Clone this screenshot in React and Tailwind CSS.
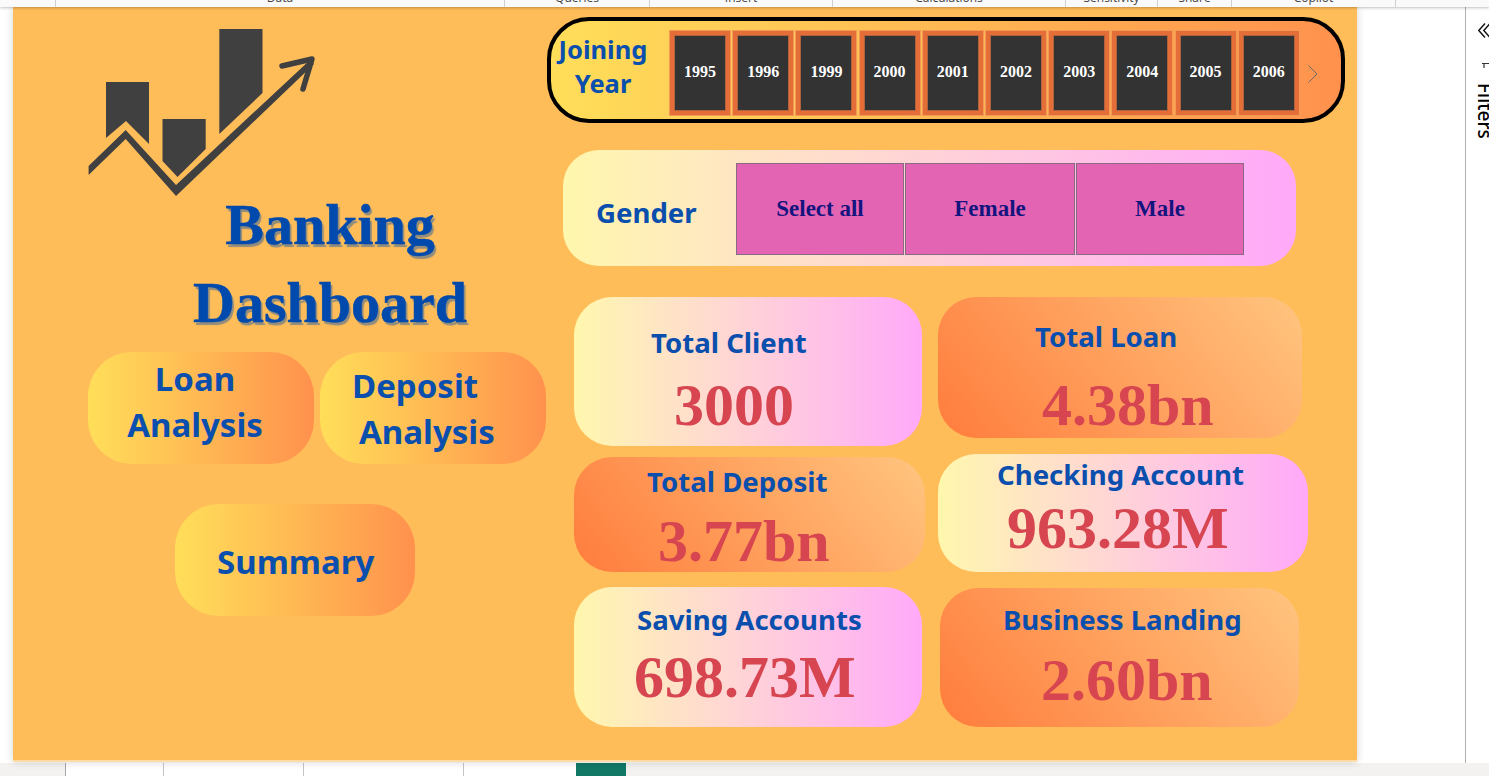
import React from "react";

const NOTO = "font-['Noto_Sans',sans-serif]";
const years = ["1995", "1996", "1999", "2000", "2001", "2002", "2003", "2004", "2005", "2006"];
const ribbon = [
  ["w-[56px]", ""],
  ["w-[449px]", "Data"],
  ["w-[145px]", "Queries"],
  ["w-[183px]", "Insert"],
  ["w-[233px]", "Calculations"],
  ["w-[92px]", "Sensitivity"],
  ["w-[74px]", "Share"],
  ["w-[164px]", "Copilot"],
];
const genders = [
  ["w-[168px]", "Select all"],
  ["w-[170px]", "Female"],
  ["w-[168px]", "Male"],
];

function Logo() {
  return (
    <svg width="240" height="175" viewBox="80 25 240 175" className="block" fill="#404040">
      <polygon points="106,82 149,82 149,144 126,121 106,138" />
      <polygon points="162.5,119 205.7,119 205.7,149 177.5,177 162.5,161" />
      <polygon points="219.3,29 262.5,29 262.5,93 219.3,134" />
      <polygon points="88.6,166 125.7,130 176,185 310,60 314,64 176,196 125.7,139 88.6,175" />
      <polyline points="282,66 312,59 303,89" fill="none" stroke="#404040" strokeWidth="5.5" strokeLinecap="round" strokeLinejoin="round" />
    </svg>
  );
}

function NavButton({ className, children }) {
  return (
    <div className={`h-[112px] rounded-[44px] bg-gradient-to-r from-[#ffde59] to-[#ff914d] text-[#0a4fad] text-[33px] font-bold leading-[46px] ${NOTO} ${className}`}>
      {children}
    </div>
  );
}

function Card({ pink, className, labelClass, valueClass, label, value }) {
  return (
    <div className={`rounded-[38px] whitespace-nowrap ${pink ? "bg-gradient-to-r from-[#fff7ad] to-[#ffa9f9]" : "bg-[linear-gradient(50deg,#ff7c3c,#ffc57f)]"} ${className}`}>
      <div className={`text-[27.6px] leading-[36px] font-bold text-[#0a4fad] ${NOTO} ${labelClass}`}>{label}</div>
      <div className={`text-[60px] leading-[60px] font-bold text-[#d64550] font-['Liberation_Serif',serif] ${valueClass}`}>{value}</div>
    </div>
  );
}

export default function App() {
  return (
    <div className="w-[1489px] h-[776px] overflow-hidden bg-white flex flex-col">
      <div className="h-[7px] bg-[#fafafa] flex shrink-0 overflow-hidden relative z-10 shadow-[0_1px_3px_rgba(0,0,0,0.25)]">
        {ribbon.map(([w, t], i) => (
          <div key={i} className={`${w} h-[7px] border-r border-[#cfcfcf] text-center text-[12px] leading-[14px] text-[#444] font-['Open_Sans',sans-serif] overflow-hidden`}>
            <div className="-mt-[9px]">{t}</div>
          </div>
        ))}
      </div>

      <div className="flex-1 flex min-h-0">
        <div className="w-[13px] bg-white" />
        <div className="w-[1344px] h-[755px] bg-[#ffbd59] border-b-2 border-[#ffdca6] flex shadow-[0_0_8px_rgba(0,0,0,0.18)] relative">
          <div className="w-[534px] shrink-0 flex flex-col pl-[67px] pt-[18px]">
            <Logo />
            <div className="ml-[30px] -mt-[14px] w-[440px] text-center font-['Liberation_Serif',serif] font-bold text-[58px] leading-[78px] text-[#004aad] [-webkit-text-stroke:0.5px_#004aad] [text-shadow:2px_3px_1px_#8f8c7e]">
              <div>Banking</div>
              <div>Dashboard</div>
            </div>
            <div className="flex gap-[6px] ml-[8px] mt-[10px]">
              <NavButton className="w-[226px] text-center pr-[12px] pt-[4px]">
                <div>Loan</div>
                <div>Analysis</div>
              </NavButton>
              <NavButton className="w-[226px] pt-[11px]">
                <div className="pl-[32px]">Deposit</div>
                <div className="pl-[39px]">Analysis</div>
              </NavButton>
            </div>
            <NavButton className="w-[240px] ml-[95px] mt-[40px] pl-[42px] pt-[35px]">Summary</NavButton>
          </div>

          <div className="flex-1 flex flex-col pt-[10px]">
            <div className="w-[798px] h-[106px] border-4 border-black rounded-[42px] bg-gradient-to-r from-[#ffde59] to-[#ff914d] flex items-start">
              <div className={`w-[104px] mt-[11px] text-center text-[25.5px] leading-[34px] font-bold text-[#0a4fad] ${NOTO}`}>
                <div>Joining</div>
                <div>Year</div>
              </div>
              <div className="flex gap-[1.2px] ml-[14px] mt-[9px]">
                {years.map((y) => (
                  <div key={y} className="w-[62px] h-[86px] bg-[#e56d37] p-[4px] border border-[#f09a55]">
                    <div className="h-full bg-[#333333] border border-[#b0623f] flex items-center justify-center pb-[2px] text-white text-[16px] font-bold font-['Liberation_Serif',serif]">
                      {y}
                    </div>
                  </div>
                ))}
              </div>
              <svg width="10" height="18" viewBox="0 0 10 18" className="ml-[8px] mt-[44px]" fill="none" stroke="#6b6b6b" strokeWidth="1">
                <polyline points="0.5,0.5 9,9 0.5,17.5" />
              </svg>
            </div>

            <div className="ml-[16px] mt-[27px] w-[733px] h-[116px] rounded-[36px] bg-gradient-to-r from-[#fff7ad] to-[#ffa9f9] flex items-start">
              <div className={`w-[173px] pl-[33px] pt-[42px] text-[27.6px] leading-[40px] font-bold text-[#0a4fad] ${NOTO}`}>Gender</div>
              <div className="flex gap-[1px] mt-[13px]">
                {genders.map(([w, g]) => (
                  <div key={g} className={`${w} h-[92px] bg-[#e464b4] border border-[#8a6a82] flex items-center justify-center text-[23px] font-bold text-[#14147e] font-['Liberation_Serif',serif]`}>
                    {g}
                  </div>
                ))}
              </div>
            </div>

            <div className="flex mt-[31px] ml-[27px] gap-[13px]">
              <div className="w-[351px] flex flex-col">
                <Card pink className="w-[348px] h-[149px]" labelClass="pl-[77px] pt-[27px]" valueClass="pl-[100px] mt-[15px]" label="Total Client" value="3000" />
                <Card className="w-[351px] h-[115px] mt-[11px]" labelClass="pl-[73px] pt-[6px]" valueClass="pl-[84px] mt-[12px]" label="Total Deposit" value="3.77bn" />
                <Card pink className="w-[348px] h-[140px] mt-[15px]" labelClass="pl-[63px] pt-[14px]" valueClass="pl-[60px] mt-[10px]" label="Saving Accounts" value="698.73M" />
              </div>
              <div className="flex flex-col">
                <Card className="w-[364px] h-[141px]" labelClass="pl-[97px] pt-[21px]" valueClass="pl-[104px] mt-[21px]" label="Total Loan" value="4.38bn" />
                <Card pink className="w-[370px] h-[118px] mt-[16px]" labelClass="pl-[59px] pt-[2px]" valueClass="pl-[69px] mt-[6px]" label="Checking Account" value="963.28M" />
                <Card className="w-[359px] h-[139px] mt-[16px] ml-[2px]" labelClass="pl-[63px] pt-[13px]" valueClass="pl-[101px] mt-[13px]" label="Business Landing" value="2.60bn" />
              </div>
            </div>
          </div>
        </div>

        <div className="w-[108px] bg-white" />
        <div className="flex-1 border-l border-[#b0b0b0] bg-white flex flex-col items-start pl-[12px] pt-[16px] overflow-hidden">
          <svg width="12" height="15" viewBox="0 0 12 15" fill="none" stroke="#111" strokeWidth="1.4" className="shrink-0">
            <polyline points="7,0.5 0.8,7.5 7,14.5" />
            <polyline points="12,0.5 5.8,7.5 12,14.5" />
          </svg>
          <svg width="10" height="7" viewBox="0 0 10 7" fill="none" stroke="#333" strokeWidth="1.2" className="shrink-0 mt-[24px] ml-[3px]">
            <path d="M1 1.5H10M3 1.5V6" />
          </svg>
          <div className={`mt-[14px] -ml-[5px] w-[24px] shrink-0 [writing-mode:vertical-rl] text-[19px] leading-[24px] h-[60px] text-black font-medium ${NOTO}`}>Filters</div>
        </div>
      </div>

      <div className="h-[13px] bg-[#f3f2f1] flex shrink-0">
        <div className="w-[65px]" />
        <div className="w-[98px] bg-white border-l border-[#a8a8a8]" />
        <div className="w-[140px] bg-white border-l border-[#c4c4c4]" />
        <div className="w-[160px] bg-white border-l border-[#c4c4c4]" />
        <div className="w-[113px] bg-white border-l border-[#c4c4c4]" />
        <div className="w-[50px] bg-[#117865]" />
      </div>
    </div>
  );
}
